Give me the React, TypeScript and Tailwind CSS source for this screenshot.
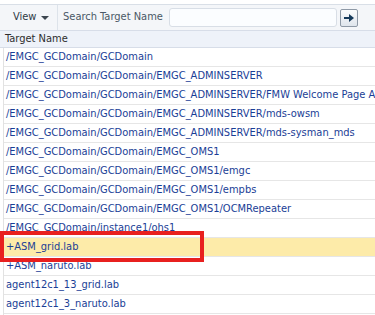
const rows = [
  "/EMGC_GCDomain/GCDomain",
  "/EMGC_GCDomain/GCDomain/EMGC_ADMINSERVER",
  "/EMGC_GCDomain/GCDomain/EMGC_ADMINSERVER/FMW Welcome Page Application",
  "/EMGC_GCDomain/GCDomain/EMGC_ADMINSERVER/mds-owsm",
  "/EMGC_GCDomain/GCDomain/EMGC_ADMINSERVER/mds-sysman_mds",
  "/EMGC_GCDomain/GCDomain/EMGC_OMS1",
  "/EMGC_GCDomain/GCDomain/EMGC_OMS1/emgc",
  "/EMGC_GCDomain/GCDomain/EMGC_OMS1/empbs",
  "/EMGC_GCDomain/GCDomain/EMGC_OMS1/OCMRepeater",
  "/EMGC_GCDomain/instance1/ohs1",
  "+ASM_grid.lab",
  "+ASM_naruto.lab",
  "agent12c1_13_grid.lab",
  "agent12c1_3_naruto.lab",
  "agent12c1_4_grid.lab",
];

export default function App() {
  return (
    <div className="relative h-[315px] w-[375px] overflow-hidden bg-white font-['DejaVu_Sans_Condensed','Liberation_Sans',sans-serif] text-[11px]">
      <div className="h-[4px]" />
      {/* toolbar */}
      <div className="flex h-[26px] items-center border-t border-[#d9dfe7] bg-[#f4f6f9] pr-[17px]">
        <div className="flex h-full w-[58px] items-center border-r border-[#dde3ea] pl-[13px] text-[#2f3a45]">
          View
          <span className="ml-[5px] mt-[1px] border-x-[4px] border-t-[4px] border-x-transparent border-t-[#3c4650]" />
        </div>
        <span className="ml-[5px] text-[#4a5866]">Search Target Name</span>
        <div className="ml-[6px] h-[19px] flex-1 rounded-[3px] border border-[#d8dee6] bg-[#fbfdff]" />
        <button className="ml-[3px] flex h-[18px] w-[18px] items-center justify-center rounded-[2px] border border-[#8e99a6] bg-gradient-to-b from-[#fbfcfd] to-[#dfe5ec]">
          <svg width="10" height="10" viewBox="0 0 10 10">
            <path d="M0 4h5V1l5 4-5 4V6H0z" fill="#163a5a" />
          </svg>
        </button>
      </div>
      {/* header */}
      <div className="flex h-[18px] items-center border-y border-[#d7dde8] bg-[#eef2f9] pl-[5px] text-[#2d2d2d]">
        Target Name
      </div>
      {/* rows */}
      <div className="ml-[3px] border-l border-[#e2e2e2]">
        {rows.map((r, i) => (
          <div
            key={i}
            className={
              "flex h-[19px] items-center overflow-hidden whitespace-nowrap border-b border-[#e6e6e6] pl-[2px] text-[#1a3e96] " +
              (i === 10 ? "bg-[#fdeba9]" : "")
            }
          >
            {r}
          </div>
        ))}
      </div>
      {/* callout */}
      <div className="absolute left-0 top-[231px] h-[31px] w-[204px] border-[4px] border-[#e8201f]" />
    </div>
  );
}
